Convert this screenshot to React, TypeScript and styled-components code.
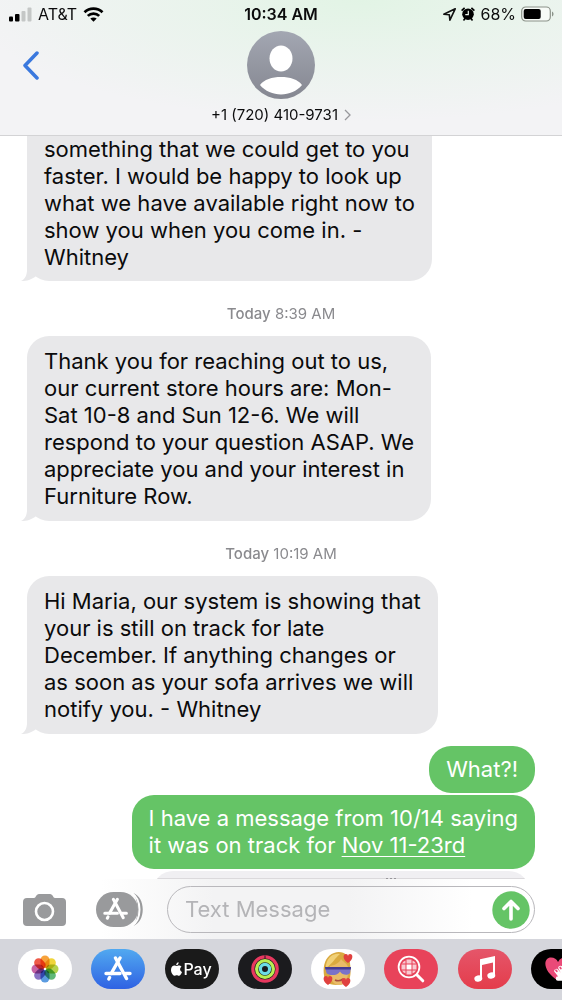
import React from 'react';
import styled, { createGlobalStyle } from 'styled-components';

const GlobalStyle = createGlobalStyle`
  * { box-sizing: border-box; }
  body {
    margin: 0;
    background: #fff;
    color: #0b0b0c;
    font-family: Inter, "Liberation Sans", sans-serif;
  }
  button { border: 0; padding: 0; background: none; color: inherit; font: inherit; cursor: pointer; }
  svg { display: block; }
`;

const Phone = styled.div`
  display: flex;
  flex-direction: column;
  height: 100vh;
  overflow: hidden;
`;

const Header = styled.header`
  flex: none;
  border-bottom: 1px solid #d3d3d5;
  background: radial-gradient(ellipse 70% 90% at 64% 0%, #e2f4e5 0%, rgba(228, 244, 231, 0.6) 45%, rgba(243, 243, 245, 0) 100%), #f3f3f5;
`;

const StatusBar = styled.div`
  display: grid;
  grid-template-columns: 1fr auto 1fr;
  align-items: center;
  height: 28px;
  padding: 0 8px;
  font-size: 16px;
`;

const StatusGroup = styled.div<{ $end?: boolean }>`
  display: flex;
  align-items: center;
  justify-content: ${(p) => (p.$end ? 'flex-end' : 'flex-start')};
  gap: ${(p) => (p.$end ? '5px' : '6px')};
`;

const Clock = styled.time`
  font-size: 16px;
  font-weight: 600;
`;

const NavBar = styled.nav`
  display: grid;
  grid-template-columns: 1fr auto 1fr;
  align-items: start;
  padding: 3px 20px 10px;
`;

const BackButton = styled.button`
  justify-self: start;
  padding: 20px 3px;
`;

const Contact = styled.button`
  display: flex;
  flex-direction: column;
  align-items: center;
  gap: 6px;
`;

const ContactName = styled.span`
  display: flex;
  align-items: center;
  gap: 6px;
  font-size: 15px;
  line-height: 20px;
`;

const Thread = styled.main`
  flex: 1;
  min-height: 0;
  overflow: hidden;
  display: flex;
  flex-direction: column;
  padding: 0 27px;
`;

const Stamp = styled.p`
  margin: 23px 0 12px;
  text-align: center;
  font-size: 15px;
  line-height: 20px;
  color: #8a8a8e;
  b { font-weight: 500; }
`;

const Bubble = styled.div<{ $sent?: boolean; $continued?: boolean }>`
  position: relative;
  flex: none;
  align-self: ${(p) => (p.$sent ? 'flex-end' : 'flex-start')};
  padding: ${(p) => (p.$continued ? '0 17px 10px' : p.$sent ? '10px 17px' : '12px 17px 11px')};
  border-radius: ${(p) => (p.$continued ? '0 0 22px 22px' : '22px')};
  background: ${(p) => (p.$sent ? '#65c466' : '#e8e8ea')};
  color: ${(p) => (p.$sent ? '#fff' : 'inherit')};
  font-size: 22px;
  line-height: 27px;
`;

const Line = styled.span`
  display: block;
  white-space: nowrap;
`;

const SentGroup = styled.div`
  display: flex;
  flex-direction: column;
  gap: 2px;
  margin-top: 12px;
`;

const DateLink = styled.a`
  color: inherit;
  text-decoration: underline;
  text-decoration-thickness: 1px;
  text-underline-offset: 3px;
`;

const TailShape = styled.svg`
  position: absolute;
  left: -6px;
  bottom: 0;
`;

const Attachment = styled.div`
  flex: none;
  align-self: flex-end;
  display: flex;
  justify-content: center;
  width: 74%;
  height: 40px;
  margin-right: 6px;
  padding: 7px 0 0 100px;
  border-radius: 22px;
  background: linear-gradient(#f0eff2 7px, #dbd9dc 7px);
`;

const Composer = styled.form`
  flex: none;
  display: flex;
  align-items: center;
  padding: 7px 27px 6px 23px;
  background: linear-gradient(90deg, #fff 18%, #f3f3f4 38%, #f3f3f4 62%, #fff 84%);
`;

const AppsButton = styled.button`
  margin: 0 24px 0 30px;
`;

const Field = styled.div`
  flex: 1;
  min-width: 0;
  display: flex;
  align-items: center;
  height: 47px;
  padding: 0 4px 0 17px;
  border: 1px solid #b9b8bc;
  border-radius: 24px;
`;

const TextBox = styled.input`
  flex: 1;
  min-width: 0;
  padding: 0;
  border: 0;
  outline: 0;
  background: transparent;
  font: 22px/27px Inter, "Liberation Sans", sans-serif;
  &::placeholder { color: #b4b4b7; opacity: 1; }
`;

const Tray = styled.div`
  flex: none;
  overflow: hidden;
  padding: 10px 0 11px 18px;
  background: #d5d6dc;
`;

const TrayRow = styled.div`
  display: grid;
  grid-template-columns: repeat(8, 1fr);
  margin-right: -42px;
`;

const AppPill = styled.button<{ $bg: string }>`
  display: flex;
  align-items: center;
  justify-content: center;
  width: 54px;
  height: 40px;
  border-radius: 20px;
  background: ${(p) => p.$bg};
  color: #fff;
`;

const PayMark = styled.span`
  display: flex;
  align-items: center;
  gap: 1px;
  font-size: 16px;
  font-weight: 500;
`;

const Tail = () => (
  <TailShape width="30" height="24" viewBox="0 0 30 24" aria-hidden="true">
    <path d="M6 0V13C6 18 4 22 0 24C5 24.500 12 22 15 19V0Z" fill="#e8e8ea" />
  </TailShape>
);

const Signal = () => (
  <svg width="24" height="15" viewBox="0 0 24 15" aria-hidden="true">
    <rect x="1" y="9.500" width="4" height="5" rx="1" />
    <rect x="7" y="7" width="4.500" height="7.500" rx="1" />
    <rect x="13.500" y="4" width="4" height="10.500" rx="1" fill="#c4c7c6" />
    <rect x="19.500" y="0.500" width="4" height="14" rx="1" fill="#c4c7c6" />
  </svg>
);

const Wifi = () => (
  <svg width="21" height="15" viewBox="0 0 20 15" fill="none" stroke="#000" strokeWidth="2.700" aria-hidden="true">
    <path d="M1 5.200C6 .3 14 .3 19 5.200" />
    <path d="M4.300 8.900C7.500 5.800 12.500 5.800 15.700 8.900" />
    <path d="M10 14.800L6.800 11.600C8.600 10 11.400 10 13.200 11.600Z" fill="#000" stroke="none" />
  </svg>
);

const LocationArrow = () => (
  <svg width="13" height="13" viewBox="0 0 13 13" fill="none" stroke="#111" strokeWidth="1.600" strokeLinejoin="round" aria-hidden="true">
    <path d="M12.200 .8L.8 6.200L6.300 6.700L6.900 12.200Z" />
  </svg>
);

const Alarm = () => (
  <svg width="14" height="14" viewBox="0 0 14 14" aria-hidden="true">
    <circle cx="7" cy="7.200" r="5.800" />
    <path d="M.6 3.600L3.600.8M13.400 3.600L10.400.8M2.500 13.500L4 11.500M11.500 13.500L10 11.500" stroke="#000" strokeWidth="1.600" />
    <path d="M7.300 3.800V7.600H4.300" fill="none" stroke="#edf6ee" strokeWidth="1.200" />
  </svg>
);

const Battery = () => (
  <svg width="33" height="16" viewBox="0 0 33 16" aria-hidden="true">
    <rect x=".7" y="1" width="28.600" height="14" rx="4" fill="#f7fbf7" stroke="#8b9289" strokeWidth="1.200" />
    <rect x="2.700" y="3" width="17" height="10" rx="2" />
    <path d="M31 5.500C33 6.200 33 9.800 31 10.500Z" fill="#8b9289" />
  </svg>
);

const Avatar = () => (
  <svg width="68" height="68" viewBox="0 0 68 68" aria-hidden="true">
    <defs>
      <linearGradient id="avatarFill" x1="0" y1="0" x2="0" y2="1">
        <stop offset="0" stopColor="#a3a7b2" />
        <stop offset="1" stopColor="#858791" />
      </linearGradient>
    </defs>
    <circle cx="34" cy="34" r="34" fill="url(#avatarFill)" />
    <ellipse cx="34" cy="27.500" rx="11.500" ry="13" fill="#fff" />
    <path d="M13 54C17 48.500 25 46 34 46S51 48.500 55 54C50 60 42 63.500 34 63.500S18 60 13 54Z" fill="#fff" />
  </svg>
);

const Camera = () => (
  <svg width="43" height="34" viewBox="0 0 43 34" aria-hidden="true">
    <path d="M4 5H11C13 5 13 1 16 1H27C30 1 30 5 32 5H39Q43 5 43 9V29Q43 33 39 33H4Q0 33 0 29V9Q0 5 4 5Z" fill="#999a9c" />
    <circle cx="21.500" cy="18.500" r="8.500" fill="none" stroke="#fff" strokeWidth="2.600" />
  </svg>
);

const StoreGlyph = () => (
  <g fill="none" stroke="#fff" strokeWidth="3.400" strokeLinecap="round">
    <path d="M16 2L7.200 17.500" />
    <path d="M11.500 2L22.500 22.500" />
    <path d="M2 17.500H16M21.500 17.500H26" />
    <path d="M5.600 21.500L4.800 23" />
  </g>
);

const AppsIcon = () => (
  <svg width="47" height="35" viewBox="0 0 47 35" aria-hidden="true">
    <path d="M37 1C50 5 50 30 37 34C43 27 43 8 37 1Z" fill="#999a9c" />
    <rect x="0" y="0" width="42" height="35" rx="17.500" fill="#999a9c" />
    <path d="M36 1C46 8 46 27 36 34" fill="none" stroke="#fff" strokeWidth="2" />
    <g transform="translate(7 5.500) scale(.9)"><StoreGlyph /></g>
  </svg>
);

const SendIcon = () => (
  <svg width="38" height="38" viewBox="0 0 38 38" aria-hidden="true">
    <circle cx="19" cy="19" r="18.700" fill="#65c466" />
    <path d="M19 28V11M12 17.500L19 10.500L26 17.500" fill="none" stroke="#fff" strokeWidth="3.600" strokeLinecap="round" strokeLinejoin="round" />
  </svg>
);

const Ellipsis = () => (
  <svg width="10" height="2" viewBox="0 0 10 2" fill="#98969b" aria-hidden="true">
    <path d="M0 0H2V1H0ZM4 0H6V1H4ZM8 0H10V1H8Z" />
  </svg>
);

const petals = ['#f7a23b', '#f0d53a', '#b4d24c', '#5fb878', '#5b9be0', '#8a72c4', '#c763a4', '#ee5a48'];

const PhotosIcon = () => (
  <svg width="28" height="28" viewBox="0 0 28 28" aria-hidden="true">
    {petals.map((color, i) => (
      <rect
        key={color}
        x="9.500"
        y=".5"
        width="9"
        height="12.500"
        rx="4.500"
        fill={color}
        style={{ mixBlendMode: 'multiply' }}
        transform={`rotate(${i * 45} 14 14)`}
      />
    ))}
  </svg>
);

const StoreIcon = () => (
  <svg width="28" height="26" viewBox="0 0 28 26" aria-hidden="true"><StoreGlyph /></svg>
);

const AppleMark = () => (
  <svg width="11" height="14" viewBox="0 0 11 14" fill="#fff" aria-hidden="true">
    <path d="M7.600.2C7.700 1.900 6.500 3.200 5.200 3.200C5 1.700 6.200.4 7.600.2Z" />
    <path d="M5.500 4.100C6 4.100 6.800 3.500 7.900 3.500C8.900 3.500 9.900 4 10.500 4.800C8.500 6 8.700 9 11 9.900C10.500 11.500 9.200 13.700 7.900 13.700C7 13.700 6.700 13.200 5.700 13.200S4.300 13.700 3.500 13.700C1.900 13.700 0 10.700 0 8C0 5.100 1.800 3.600 3.400 3.600C4.400 3.600 5 4.100 5.500 4.100Z" />
  </svg>
);

const ActivityIcon = () => (
  <svg width="30" height="30" viewBox="0 0 30 30" fill="none" strokeWidth="3.200" aria-hidden="true">
    <circle cx="15" cy="15" r="12.200" stroke="#e8385f" />
    <circle cx="15" cy="15" r="8.400" stroke="#b9ee52" />
    <circle cx="15" cy="15" r="4.600" stroke="#6cdde6" />
    <path d="M15 1.500V5" stroke="#1b1b1e" strokeWidth="1" />
  </svg>
);

const Heart = ({ x, y, s }: { x: number; y: number; s: number }) => (
  <path transform={`translate(${x} ${y}) scale(${s})`} d="M0 8C-6 4-5-1-2-1Q0-1 0 1Q0-1 2-1C5-1 6 4 0 8Z" fill="#e0413f" />
);

const MemojiIcon = () => (
  <svg width="32" height="36" viewBox="0 0 32 36" aria-hidden="true">
    <path d="M4 31C-1 20 2 5 12 2C20-1 28 4 28 12C29 20 29 26 26 31C20 35 9 35 4 31Z" fill="#d9a93f" />
    <path d="M4 14C6 5 12 2 18 3C13 7 11 12 4 17Z" fill="#f0d077" />
    <path d="M8 15C14 14 18 11 19 8C21 11 25 12 26 16C27 26 24 34 17 34S7 26 8 15Z" fill="#e9bb68" />
    <path d="M3 16H29L28 22C26 25 20 24 18 20.500C16 25 7 25 4.500 22Z" fill="#7a72c8" />
    <path d="M3 16H29L28.800 18.500H3.500Z" fill="#453b92" />
    <path d="M13 29Q17 31 21 28" fill="none" stroke="#a84e3c" strokeWidth="1.600" />
    <Heart x={26} y={4} s={1} />
    <Heart x={6} y={26} s={1} />
    <Heart x={24} y={28} s={1} />
  </svg>
);

const ImagesIcon = () => (
  <svg width="28" height="28" viewBox="0 0 28 28" fill="none" stroke="#fff" aria-hidden="true">
    <circle cx="12" cy="12" r="10.400" strokeWidth="1.800" />
    <path d="M20 20L25.800 25.800" strokeWidth="3" strokeLinecap="round" />
    <path d="M9.500 9.500H14.500V14.500H9.500Z" fill="#fff" stroke="none" />
    <path d="M4.500 9.500H8.500V14.500H4.500ZM15.500 9.500H19.500V14.500H15.500ZM9.500 4.500H14.500V8.500H9.500ZM9.500 15.500H14.500V19.500H9.500ZM15.500 5.500Q18 6.500 19 8.500H15.500ZM8.500 18.500Q6 17.500 5 15.500H8.500ZM5 8.500Q6 6.500 8.500 5.500V8.500ZM15.500 15.500H19Q18 17.500 15.500 18.500Z" fill="#fff" fillOpacity=".72" stroke="none" />
  </svg>
);

const MusicIcon = () => (
  <svg width="24" height="28" viewBox="0 0 24 28" fill="#fff" aria-hidden="true">
    <path d="M7 4.200L22 1V20H20V7.500L9 9.900V23H7Z" />
    <ellipse cx="5.300" cy="23.500" rx="4" ry="3.200" transform="rotate(-15 5.300 23.500)" />
    <ellipse cx="18.300" cy="20.500" rx="4" ry="3.200" transform="rotate(-15 18.300 20.500)" />
  </svg>
);

const TouchIcon = () => (
  <svg width="28" height="24" viewBox="0 0 28 24" aria-hidden="true">
    <path d="M14 23.500C-2 14-1 .5 7 .5Q12 .5 14 5Q16 .5 21 .5C29 .5 30 14 14 23.500Z" fill="#ea4a78" />
    <path d="M12.500 14L16.500 19M16.500 11L20 17M14 21.500L20 21.500" stroke="#fff" strokeWidth="4.400" strokeLinecap="round" />
    <path d="M12 13.200L12.800 14.200M16.200 10.500L16.800 11.500" stroke="#ea4a78" strokeWidth="1.800" strokeLinecap="round" />
  </svg>
);

const messages = {
  lookup: [
    'something that we could get to you',
    'faster. I would be happy to look up',
    'what we have available right now to',
    'show you when you come in. -',
    'Whitney',
  ],
  hours: [
    'Thank you for reaching out to us,',
    'our current store hours are: Mon-',
    'Sat 10-8 and Sun 12-6. We will',
    'respond to your question ASAP. We',
    'appreciate you and your interest in',
    'Furniture Row.',
  ],
  tracking: [
    'Hi Maria, our system is showing that',
    'your is still on track for late',
    'December. If anything changes or',
    'as soon as your sofa arrives we will',
    'notify you. - Whitney',
  ],
};

const Received = ({ lines, continued }: { lines: string[]; continued?: boolean }) => (
  <Bubble $continued={continued}>
    <Tail />
    {lines.map((line) => <Line key={line}>{line}</Line>)}
  </Bubble>
);

const trayApps = [
  { name: 'Photos', bg: '#fff', icon: <PhotosIcon /> },
  { name: 'App Store', bg: 'linear-gradient(#51a9f0, #2f62e3)', icon: <StoreIcon /> },
  { name: 'Apple Pay', bg: '#1a1a1a', icon: <PayMark><AppleMark />Pay</PayMark> },
  { name: 'Activity', bg: '#1b1b1e', icon: <ActivityIcon /> },
  { name: 'Memoji', bg: '#fff', icon: <MemojiIcon /> },
  { name: 'Images', bg: '#e8435a', icon: <ImagesIcon /> },
  { name: 'Music', bg: 'linear-gradient(#e5566a, #e43c4b)', icon: <MusicIcon /> },
  { name: 'Digital Touch', bg: '#000', icon: <TouchIcon /> },
];

export default function App() {
  return (
    <Phone>
      <GlobalStyle />
      <Header>
        <StatusBar>
          <StatusGroup><Signal />AT&amp;T<Wifi /></StatusGroup>
          <Clock>10:34 AM</Clock>
          <StatusGroup $end><LocationArrow /><Alarm />68%<Battery /></StatusGroup>
        </StatusBar>
        <NavBar>
          <BackButton aria-label="Back">
            <svg width="16" height="29" viewBox="0 0 16 29" fill="none" stroke="#3a78de" strokeWidth="3.500" strokeLinecap="round" strokeLinejoin="round">
              <path d="M14 2L2 14.500L14 27" />
            </svg>
          </BackButton>
          <Contact>
            <Avatar />
            <ContactName>
              +1 (720) 410-9731
              <svg width="7" height="12" viewBox="0 0 7 12" fill="none" stroke="#98989c" strokeWidth="1.300">
                <path d="M1 1L6 6L1 11" />
              </svg>
            </ContactName>
          </Contact>
        </NavBar>
      </Header>

      <Thread>
        <Received continued lines={messages.lookup} />
        <Stamp><b>Today</b> 8:39 AM</Stamp>
        <Received lines={messages.hours} />
        <Stamp><b>Today</b> 10:19 AM</Stamp>
        <Received lines={messages.tracking} />
        <SentGroup>
          <Bubble $sent><Line>What?!</Line></Bubble>
          <Bubble $sent>
            <Line>I have a message from 10/14 saying</Line>
            <Line>it was on track for <DateLink href="#date">Nov 11-23rd</DateLink></Line>
          </Bubble>
          <Attachment><Ellipsis /></Attachment>
        </SentGroup>
      </Thread>

      <Composer onSubmit={(e) => e.preventDefault()}>
        <button type="button" aria-label="Camera"><Camera /></button>
        <AppsButton type="button" aria-label="Apps"><AppsIcon /></AppsButton>
        <Field>
          <TextBox type="text" aria-label="Text Message" placeholder="Text Message" />
          <button type="submit" aria-label="Send"><SendIcon /></button>
        </Field>
      </Composer>

      <Tray>
        <TrayRow>
          {trayApps.map((app) => (
            <AppPill key={app.name} $bg={app.bg} aria-label={app.name}>{app.icon}</AppPill>
          ))}
        </TrayRow>
      </Tray>
    </Phone>
  );
}
